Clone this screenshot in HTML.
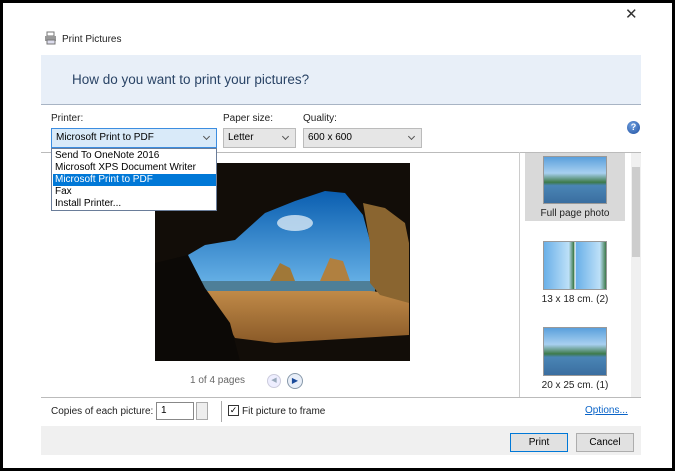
<!DOCTYPE html>
<html><head><style>
*{margin:0;padding:0;box-sizing:border-box}
body{width:675px;height:471px;background:#000;font-family:"Liberation Sans",sans-serif;font-size:10px;color:#000;position:relative;overflow:hidden}
.a{position:absolute}
.dd{position:absolute;height:20px;border:1px solid #bbb;background:#e6e6e6;padding:3px 4px;font-size:10px}
.dd:after{content:"";position:absolute;right:7px;top:5px;width:4px;height:4px;border-right:1px solid #555;border-bottom:1px solid #555;transform:rotate(45deg)}
.it{position:absolute;left:1px;width:163px;height:12px;line-height:12px;padding-left:2px;font-size:10px}
.th{position:absolute;border:1px solid #999;background:linear-gradient(#5aa0dc 0%,#a8d0f0 35%,#3d7a4a 55%,#4a85b5 62%,#3a6ea0 100%)}
.cap{position:absolute;font-size:10px;color:#222;text-align:center;width:100px}
.btn{position:absolute;height:19px;border:1px solid #adadad;background:#e1e1e1;text-align:center;line-height:17px;font-size:10px}
</style></head><body>
<div class="a" style="left:3px;top:3px;width:669px;height:465px;background:#fff"></div>
<div class="a" style="left:625px;top:5px;font-size:15px;color:#333">✕</div>
<svg class="a" style="left:44px;top:31px" width="14" height="14"><rect x="3" y="1" width="7" height="4" fill="#fff" stroke="#777"/><rect x="1" y="5" width="11" height="5" fill="#999"/><rect x="3" y="9" width="8" height="4" fill="#dde" stroke="#777"/></svg>
<div class="a" style="left:62px;top:34px;font-size:10px;color:#222">Print Pictures</div>
<div class="a" style="left:41px;top:55px;width:600px;height:50px;background:#e8eff8;border-bottom:1px solid #a8b4c4"></div>
<div class="a" style="left:72px;top:72px;font-size:13.5px;color:#2a4466">How do you want to print your pictures?</div>
<div class="a" style="left:51px;top:113px;color:#222">Printer:</div>
<div class="a" style="left:223px;top:113px;color:#222">Paper size:</div>
<div class="a" style="left:303px;top:113px;color:#222">Quality:</div>
<div class="dd" style="left:51px;top:128px;width:166px;border-color:#3c8de0;background:#d9eaf9">Microsoft Print to PDF</div>
<div class="dd" style="left:223px;top:128px;width:73px">Letter</div>
<div class="dd" style="left:303px;top:128px;width:119px">600 x 600</div>
<div class="a" style="left:627px;top:121px;width:13px;height:13px;border-radius:50%;background:radial-gradient(circle at 40% 35%,#6fa0e0,#1f4fa0);color:#fff;font-size:9px;font-weight:bold;text-align:center;line-height:13px">?</div>
<div class="a" style="left:41px;top:152px;width:600px;height:1px;background:#bbb"></div>
<div class="a" style="left:519px;top:152px;width:1px;height:245px;background:#ccc"></div>
<div class="a" style="left:41px;top:397px;width:600px;height:1px;background:#bbb"></div>
<svg class="a" style="left:155px;top:163px" width="255" height="198" viewBox="0 0 255 198">
<defs><linearGradient id="sky" x1="0" y1="0" x2="0" y2="1"><stop offset="0" stop-color="#0a5eb0"/><stop offset="1" stop-color="#6ab4e8"/></linearGradient>
<linearGradient id="sand" x1="0" y1="0" x2="0" y2="1"><stop offset="0" stop-color="#c08a48"/><stop offset="1" stop-color="#8a5a28"/></linearGradient></defs>
<rect width="255" height="198" fill="#120d08"/>
<path d="M33 92 L50 82 L80 77 L110 50 L140 38 L170 28 L190 30 L208 52 L215 78 L215 125 L40 125 Z" fill="url(#sky)"/>
<ellipse cx="140" cy="60" rx="18" ry="8" fill="#d8e8f5" opacity=".8"/>
<path d="M115 118 L125 100 L135 105 L140 118 Z" fill="#a07838"/>
<path d="M165 118 L175 95 L188 98 L195 118 Z" fill="#b08040"/>
<rect x="40" y="118" width="180" height="12" fill="#4e7f98"/>
<path d="M40 128 L215 128 L254 132 L254 172 L120 180 L80 175 L60 140 Z" fill="url(#sand)"/>
<path d="M208 40 L230 45 L250 60 L254 80 L254 140 L225 132 L215 120 L215 80 Z" fill="#8a6530"/>
<path d="M0 100 L33 92 L50 125 L75 160 L85 198 L0 198 Z" fill="#0c0906"/>
</svg>
<div class="a" style="left:190px;top:375px;color:#666">1 of 4 pages</div>
<div class="a" style="left:267px;top:374px;width:14px;height:14px;border-radius:50%;border:1px solid #ccd;background:#eef;color:#9ab;font-size:7px;text-align:center;line-height:12px">◀</div>
<div class="a" style="left:287px;top:373px;width:16px;height:16px;border-radius:50%;border:1px solid #89a;background:#e8eef8;color:#1a4a9a;font-size:8px;text-align:center;line-height:14px">▶</div>
<div class="a" style="left:525px;top:153px;width:100px;height:68px;background:#d9d9d9"></div>
<div class="th" style="left:543px;top:156px;width:64px;height:48px"></div>
<div class="cap" style="left:525px;top:208px">Full page photo</div>
<div class="th" style="left:543px;top:241px;width:64px;height:49px;background:linear-gradient(90deg,#6ab0e8,#bde0f8 40%,#3d7a4a 48%,#fff 50%,#6ab0e8 52%,#bde0f8 90%,#3d7a4a)"></div>
<div class="cap" style="left:525px;top:294px">13 x 18 cm. (2)</div>
<div class="th" style="left:543px;top:327px;width:64px;height:49px"></div>
<div class="cap" style="left:525px;top:380px">20 x 25 cm. (1)</div>
<div class="a" style="left:631px;top:153px;width:10px;height:244px;background:#f0f0f0"></div>
<div class="a" style="left:632px;top:167px;width:8px;height:90px;background:#cdcdcd"></div>
<div class="a" style="left:51px;top:406px;color:#222">Copies of each picture:</div>
<div class="a" style="left:156px;top:402px;width:38px;height:18px;border:1px solid #888;padding:2px 4px">1</div>
<div class="a" style="left:196px;top:402px;width:12px;height:18px;border:1px solid #aaa;background:#eee"></div>
<div class="a" style="left:221px;top:401px;width:1px;height:21px;background:#aaa"></div>
<div class="a" style="left:228px;top:405px;width:11px;height:11px;border:1px solid #333;font-size:9px;line-height:9px;text-align:center">✓</div>
<div class="a" style="left:242px;top:406px;color:#222">Fit picture to frame</div>
<div class="a" style="left:585px;top:405px;color:#0a64c8;text-decoration:underline">Options...</div>
<div class="a" style="left:41px;top:426px;width:600px;height:29px;background:#f0f0f0"></div>
<div class="btn" style="left:510px;top:433px;width:58px;border-color:#0078d7">Print</div>
<div class="btn" style="left:576px;top:433px;width:58px">Cancel</div>
<div class="a" style="left:51px;top:148px;width:166px;height:63px;border:1px solid #6a7d9a;background:#fff">
<div class="it" style="top:1px">Send To OneNote 2016</div>
<div class="it" style="top:13px">Microsoft XPS Document Writer</div>
<div class="it" style="top:25px;background:#0078d7;color:#fff">Microsoft Print to PDF</div>
<div class="it" style="top:37px">Fax</div>
<div class="it" style="top:49px">Install Printer...</div>
</div>
</body></html>
